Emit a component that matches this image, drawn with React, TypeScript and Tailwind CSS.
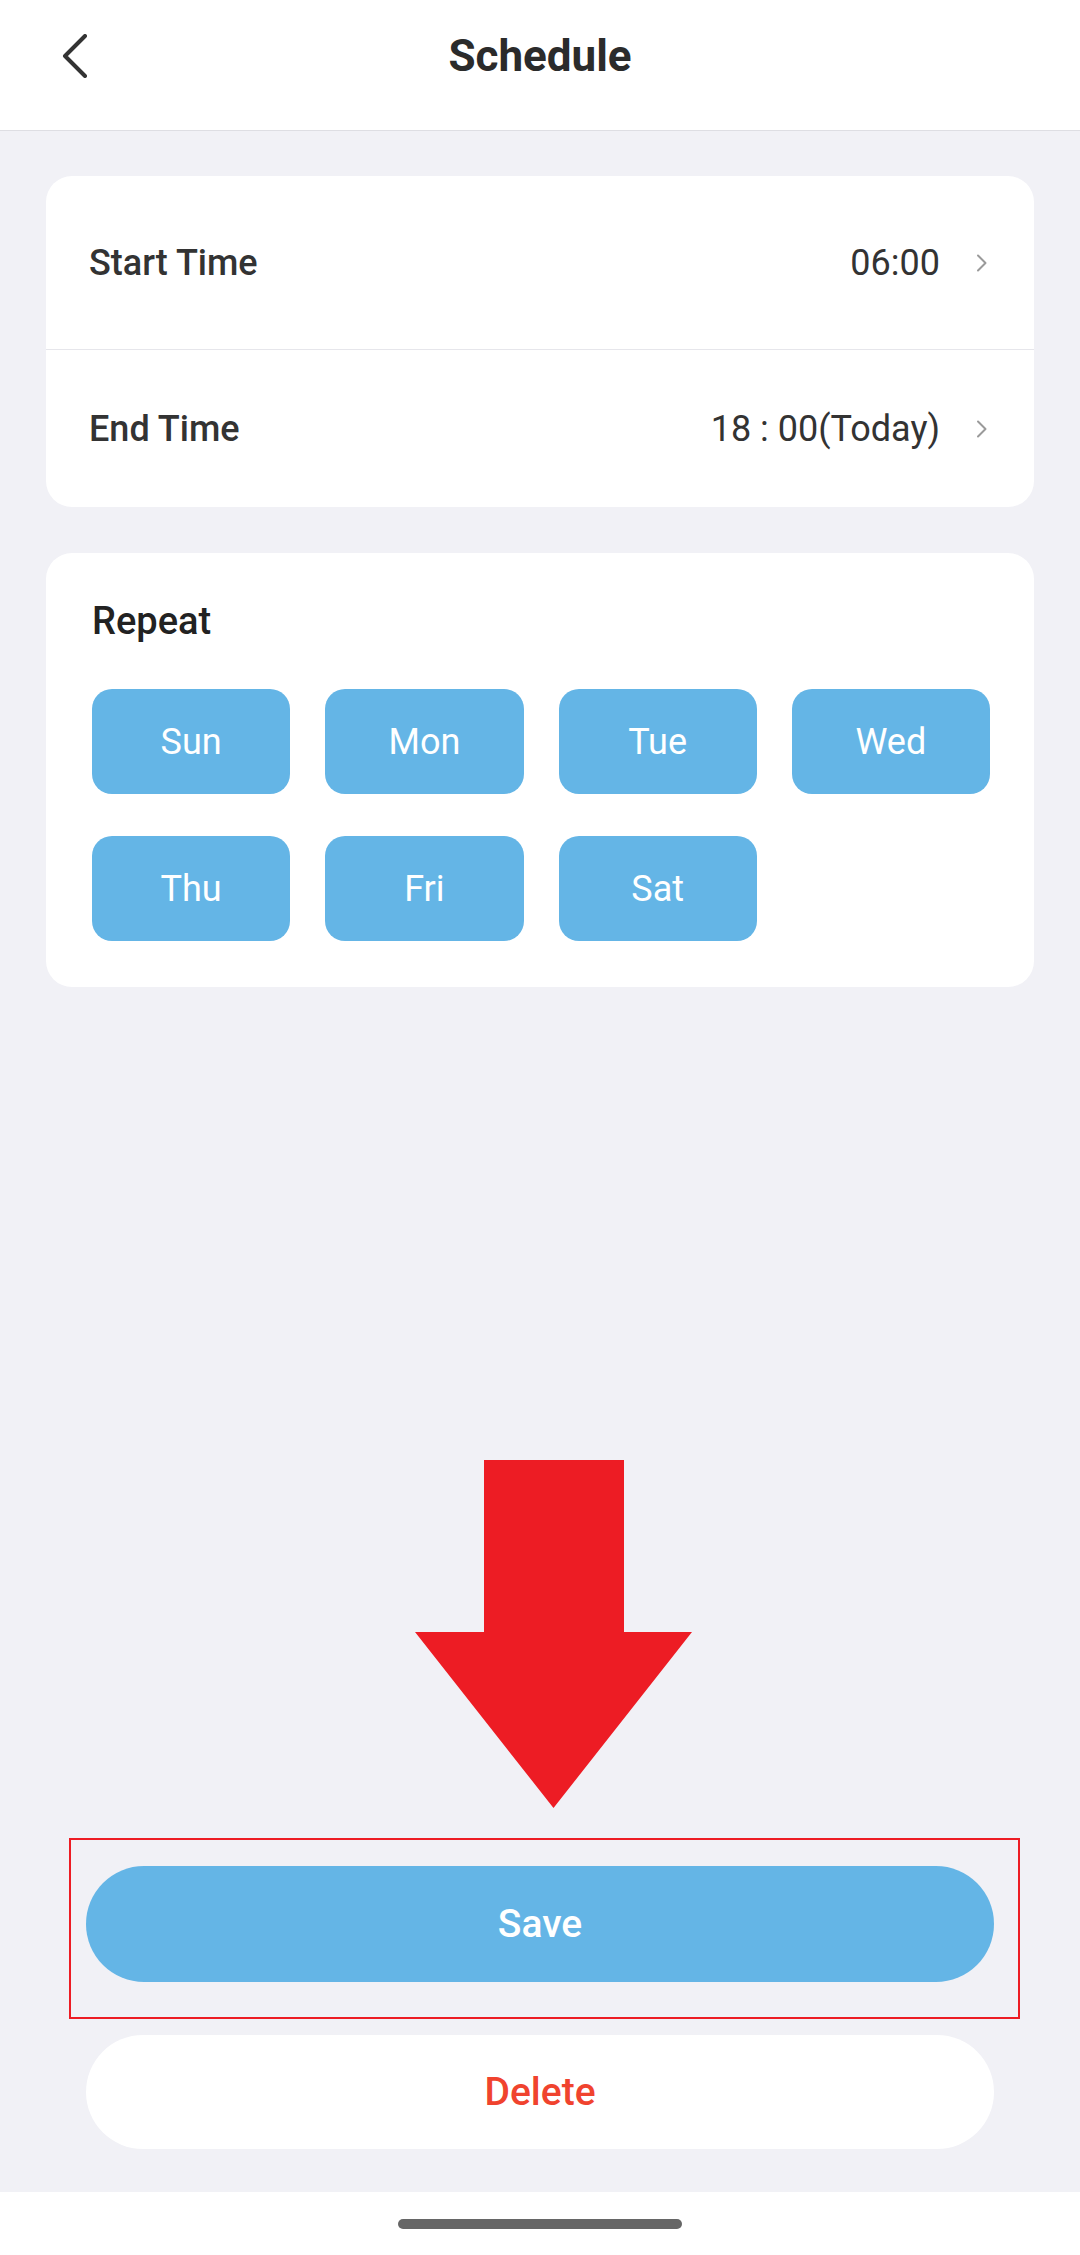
import React from "react";

const DAYS = ["Sun", "Mon", "Tue", "Wed", "Thu", "Fri", "Sat"];

function BackIcon() {
  return (
    <svg width="26" height="44" viewBox="0 0 26 44" fill="none">
      <path d="M23 2 L3 22 L23 42" stroke="#333333" strokeWidth="4" strokeLinecap="round" strokeLinejoin="round" />
    </svg>
  );
}

function ChevronRight() {
  return (
    <svg width="12" height="18" viewBox="0 0 12 18" fill="none">
      <path d="M2 1.5 L9.5 9 L2 16.5" stroke="#9a9a9a" strokeWidth="2" strokeLinecap="round" strokeLinejoin="round" />
    </svg>
  );
}

function TimeRow({ label, value, tall }: { label: string; value: string; tall?: boolean }) {
  return (
    <div className={`flex items-center pl-[43px] pr-[46px] ${tall ? "h-[173px]" : "h-[157px]"}`}>
      <span className="flex-1 text-[36px] font-medium text-[#333333] leading-none">{label}</span>
      <span className="text-[36px] text-[#333333] leading-none">{value}</span>
      <span className="ml-[36px] flex items-center">
        <ChevronRight />
      </span>
    </div>
  );
}

export default function App() {
  return (
    <div
      className="w-[1080px] h-[2255px] bg-[#f1f1f6] flex flex-col overflow-hidden"
      style={{ fontFamily: "Roboto, 'Noto Sans', sans-serif" }}
    >
      {/* header */}
      <div className="h-[131px] bg-white border-b border-[#dedee3] shrink-0">
        <div className="relative h-[111px] flex items-center justify-center">
          <button className="absolute left-[62px] top-[34px]">
            <BackIcon />
          </button>
          <h1 className="text-[44px] font-bold text-[#2b2b2b] leading-none">Schedule</h1>
        </div>
      </div>

      <div className="px-[46px]">
        {/* time card */}
        <div className="mt-[45px] bg-white rounded-[26px] overflow-hidden">
          <TimeRow label="Start Time" value="06:00" tall />
          <div className="h-px bg-[#e6e6eb]" />
          <TimeRow label="End Time" value="18 : 00(Today)" />
        </div>

        {/* repeat card */}
        <div className="mt-[46px] bg-white rounded-[26px] pt-[49px] pb-[46px] pl-[46px] pr-[44px]">
          <div className="text-[38px] font-medium text-[#222222] leading-none">Repeat</div>
          <div className="mt-[49px] grid grid-cols-4 gap-x-[35px] gap-y-[42px]">
            {DAYS.map((d) => (
              <div
                key={d}
                className="h-[105px] rounded-[20px] bg-[#64b5e6] flex items-center justify-center text-white text-[36px] leading-none"
              >
                {d}
              </div>
            ))}
          </div>
        </div>
      </div>

      {/* annotation arrow */}
      <svg className="mt-[473px] ml-[415px] shrink-0" width="277" height="348" viewBox="0 0 277 348">
        <polygon points="69,0 209,0 209,172 277,172 138.5,348 0,172 69,172" fill="#ed1c24" />
      </svg>

      {/* save (highlighted) */}
      <div className="mt-[30px] ml-[69px] w-[951px] border-2 border-[#ed1c24] pt-[26px] pb-[35px] pl-[15px] pr-[24px]">
        <button className="w-[908px] h-[116px] rounded-full bg-[#64b5e6] text-white text-[39px] font-medium leading-none">
          Save
        </button>
      </div>

      <div className="mt-[16px] pl-[86px]">
        <button className="w-[908px] h-[114px] rounded-full bg-white text-[#f0432e] text-[39px] font-medium leading-none">
          Delete
        </button>
      </div>

      {/* home indicator bar */}
      <div className="mt-[43px] h-[63px] bg-white flex justify-center shrink-0">
        <div className="mt-[27px] w-[284px] h-[10px] rounded-full bg-[#666666]" />
      </div>
    </div>
  );
}
